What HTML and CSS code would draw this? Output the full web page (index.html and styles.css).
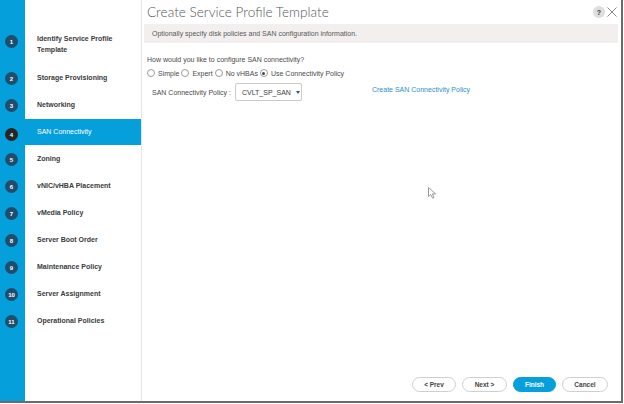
FILE: index.html
```html
<!DOCTYPE html>
<html lang="en">
<head>
<meta charset="utf-8">
<title>Create Service Profile Template</title>
<link rel="stylesheet" href="styles.css">
</head>
<body>
<div class="frame">
  <ol class="steps">
    <li class="step first"><span class="num">1</span><span class="label">Identify Service Profile<br>Template</span></li>
    <li class="step"><span class="num">2</span><span class="label">Storage Provisioning</span></li>
    <li class="step"><span class="num">3</span><span class="label">Networking</span></li>
    <li class="step active"><span class="num">4</span><span class="label">SAN Connectivity</span></li>
    <li class="step"><span class="num">5</span><span class="label">Zoning</span></li>
    <li class="step"><span class="num">6</span><span class="label">vNIC/vHBA Placement</span></li>
    <li class="step"><span class="num">7</span><span class="label">vMedia Policy</span></li>
    <li class="step"><span class="num">8</span><span class="label">Server Boot Order</span></li>
    <li class="step"><span class="num">9</span><span class="label">Maintenance Policy</span></li>
    <li class="step"><span class="num">10</span><span class="label">Server Assignment</span></li>
    <li class="step"><span class="num">11</span><span class="label">Operational Policies</span></li>
  </ol>
  <main class="wizard">
    <header class="head">
      <h1>Create Service Profile Template</h1>
      <div class="tools">
        <span class="help">?</span>
        <svg class="close" width="10" height="10" viewBox="0 0 10 10"><path d="M0.5 0.5 L9.5 9.5 M9.5 0.5 L0.5 9.5" stroke="#7a7a7a" stroke-width="0.9" fill="none"/></svg>
      </div>
    </header>
    <div class="info">Optionally specify disk policies and SAN configuration information.</div>
    <section class="body">
      <p class="q">How would you like to configure SAN connectivity?</p>
      <div class="radios">
        <span class="opt"><span class="radio"></span>Simple</span>
        <span class="opt"><span class="radio"></span>Expert</span>
        <span class="opt"><span class="radio"></span>No vHBAs</span>
        <span class="opt"><span class="radio on"></span>Use Connectivity Policy</span>
      </div>
      <div class="policy">
        <span class="plabel">SAN Connectivity Policy :</span>
        <span class="select">CVLT_SP_SAN<span class="caret"></span></span>
        <a class="link" href="#">Create SAN Connectivity Policy</a>
      </div>
    </section>
    <div class="spacer"></div>
    <footer class="actions">
      <button class="btn w44">&lt; Prev</button>
      <button class="btn w45">Next &gt;</button>
      <button class="btn primary w43">Finish</button>
      <button class="btn w46">Cancel</button>
    </footer>
  </main>
  <svg class="cursor" width="9" height="12" viewBox="0 0 9 12"><path d="M0.5 0.5 L0.5 9.6 L2.8 7.5 L4.5 11.2 L6 10.5 L4.4 6.9 L7.6 6.9 Z" fill="#fff" stroke="#808080" stroke-width="0.8" stroke-linejoin="round"/></svg>
</div>
</body>
</html>
```
FILE: styles.css
```css
html, body {
  margin: 0;
  background: #fff;
}
body {
  width: 624px;
  height: 404px;
  overflow: hidden;
  font-family: "Liberation Sans", Arial, sans-serif;
  font-size: 7px;
  color: #3a3a3c;
}
.frame {
  position: relative;
  display: flex;
  width: 621px;
  height: 401px;
  border-right: 2px solid #6b6b6b;
  border-bottom: 2px solid #6b6b6b;
  background: #fff;
}
.steps {
  list-style: none;
  margin: 0;
  padding: 28px 0 0;
  width: 141px;
  flex: none;
  border-right: 1px solid #e6e6e6;
  background: linear-gradient(to right, #05a0db 25px, #fff 25px);
}
.step {
  display: grid;
  grid-template-columns: 25px 1fr;
  align-items: center;
  height: 27px;
}
.step.first {
  height: 37px;
  box-sizing: border-box;
  align-items: start;
  padding-top: 7px;
}
.num {
  width: 13px;
  height: 13px;
  margin-left: 5px;
  border-radius: 50%;
  background: #1f4d6c;
  color: #fff;
  font-size: 6px;
  font-weight: bold;
  display: flex;
  align-items: center;
  justify-content: center;
}
.label {
  padding-left: 12px;
  font-weight: bold;
  line-height: 10.7px;
  color: #3a3a3c;
}
.step.first .label {
  margin-top: -1px;
}
.step.active .num {
  background: #262626;
}
.step.active .label {
  height: 26px;
  margin-bottom: 5px;
  display: flex;
  align-items: center;
  background: #05a0db;
  color: #fff;
  font-weight: normal;
}
.wizard {
  flex: 1;
  min-width: 0;
  display: flex;
  flex-direction: column;
  padding: 0 3px 0 2px;
}
.head {
  height: 24px;
  display: flex;
  align-items: center;
  justify-content: space-between;
}
h1 {
  margin: 0 0 0 3px;
  font-family: Lato, sans-serif;
  font-weight: 300;
  font-size: 13.6px;
  color: #55565a;
}
.tools {
  display: flex;
  align-items: center;
  gap: 2px;
  margin-right: 1px;
}
.help {
  width: 12px;
  height: 12px;
  border-radius: 50%;
  background: #dedede;
  color: #333;
  font-weight: bold;
  font-size: 7px;
  display: flex;
  align-items: center;
  justify-content: center;
}
.close {
  display: block;
}
.info {
  height: 19px;
  display: flex;
  align-items: center;
  padding-left: 8px;
  background: #f2efee;
  color: #58585a;
}
.body {
  padding-left: 3px;
}
.q {
  margin: 12px 0 0;
  line-height: 10px;
  color: #4a4a4c;
}
.radios {
  display: flex;
  align-items: center;
  height: 10px;
  margin-top: 3px;
  color: #4a4a4c;
}
.opt {
  display: flex;
  align-items: center;
  margin-right: 2px;
}
.radio {
  width: 6px;
  height: 6px;
  border: 0.8px solid #9c9c9c;
  border-radius: 50%;
  margin-right: 3px;
  display: flex;
  align-items: center;
  justify-content: center;
}
.radio.on::after {
  content: "";
  width: 3px;
  height: 3px;
  border-radius: 50%;
  background: #444;
}
.policy {
  display: flex;
  align-items: center;
  margin-top: 5px;
  padding-left: 5px;
  color: #4a4a4c;
}
.select {
  width: 67px;
  height: 18px;
  box-sizing: border-box;
  margin-left: 4px;
  padding-left: 6px;
  border: 1px solid #cbcbcb;
  border-radius: 2px;
  display: flex;
  align-items: center;
  color: #3a3a3c;
}
.caret {
  margin-left: 5px;
  width: 0;
  height: 0;
  border-left: 2px solid transparent;
  border-right: 2px solid transparent;
  border-top: 3px solid #2d5a85;
}
.link {
  margin-left: 70px;
  margin-bottom: 5px;
  color: #2b8fca;
  text-decoration: none;
}
.spacer {
  flex: 1;
}
.actions {
  display: flex;
  justify-content: flex-end;
  gap: 6px;
  padding: 0 10px 9px 0;
}
.btn {
  height: 15px;
  box-sizing: border-box;
  padding: 0;
  border: 1px solid #cfcfcf;
  border-radius: 8px;
  background: #fff;
  font-family: "Liberation Sans", Arial, sans-serif;
  font-weight: bold;
  font-size: 6.5px;
  color: #444;
  display: flex;
  align-items: center;
  justify-content: center;
}
.btn.primary {
  background: #05a0db;
  border-color: #05a0db;
  color: #fff;
}
.w43 { width: 43px; }
.w44 { width: 44px; }
.w45 { width: 45px; }
.w46 { width: 46px; }
.cursor {
  position: absolute;
  left: 428px;
  top: 187px;
}
```
